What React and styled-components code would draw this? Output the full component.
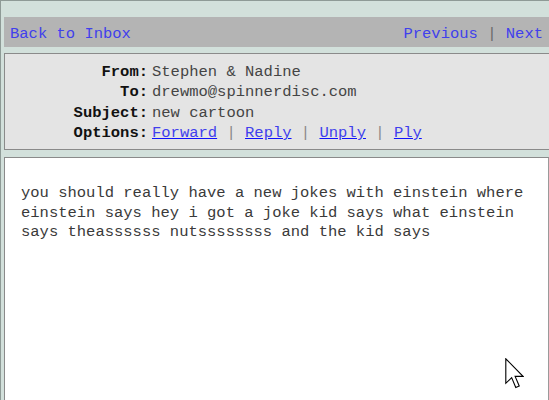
import React from "react";
import styled, { createGlobalStyle } from "styled-components";

const Global = createGlobalStyle`
  html, body { margin: 0; padding: 0; background: #d2e0db; }
  body { font-family: "Liberation Mono", "Courier New", monospace; }
`;

const Frame = styled.div`
  position: relative;
  box-sizing: border-box;
  height: 400px;
  overflow: hidden;
  background: #d2e0db;
  border-top: 1px solid #8e9a96;
  border-left: 1px solid #8e9a96;
  padding: 16px 0 0 3px;
  font-size: 15.5px;
`;

const Toolbar = styled.div`
  display: flex;
  align-items: center;
  justify-content: space-between;
  box-sizing: border-box;
  height: 30px;
  padding: 3px 6px 0 6px;
  background: #b4b4b4;
  margin-bottom: 6px;
`;

const NavLink = styled.a`
  color: #4040ec;
  text-decoration: none;
  cursor: pointer;
`;

const Sep = styled.span`
  color: #6a6a6a;
`;

const Header = styled.div`
  display: grid;
  grid-template-columns: 143px 1fr;
  column-gap: 4px;
  grid-auto-rows: 20.3px;
  align-items: center;
  padding: 8px 0 6px 0;
  background: #e4e4e4;
  border-top: 1px solid #8a8a8a;
  border-left: 1px solid #8a8a8a;
  border-bottom: 1px solid #8a8a8a;
`;

const Label = styled.div`
  text-align: right;
  font-weight: bold;
  color: #111;
`;

const Value = styled.div`
  color: #444;
  white-space: pre;
`;

const OptLink = styled.a`
  color: #4040ec;
  text-decoration: underline;
  text-decoration-color: #1010ff;
  cursor: pointer;
`;

const OptSep = styled.span`
  color: #8a8a8a;
`;

const Body = styled.div`
  margin-top: 7px;
  box-sizing: border-box;
  height: 260px;
  background: #ffffff;
  border-top: 1px solid #8a8a8a;
  border-left: 1px solid #8a8a8a;
  border-right: 1px solid #9a9a9a;
  padding: 26px 12px 0 16px;
  color: #3a3a3a;
  line-height: 19.5px;
`;

const Cursor = styled.svg`
  position: absolute;
  left: 504px;
  top: 357px;
`;

export default function App() {
  return (
    <>
      <Global />
      <Frame>
        <Toolbar>
          <NavLink>Back to Inbox</NavLink>
          <span>
            <NavLink>Previous</NavLink>
            <Sep> | </Sep>
            <NavLink>Next</NavLink>
          </span>
        </Toolbar>
        <Header>
          <Label>From:</Label>
          <Value>Stephen &amp; Nadine</Value>
          <Label>To:</Label>
          <Value>drewmo@spinnerdisc.com</Value>
          <Label>Subject:</Label>
          <Value>new cartoon</Value>
          <Label>Options:</Label>
          <Value>
            <OptLink>Forward</OptLink>
            <OptSep> | </OptSep>
            <OptLink>Reply</OptLink>
            <OptSep> | </OptSep>
            <OptLink>Unply</OptLink>
            <OptSep> | </OptSep>
            <OptLink>Ply</OptLink>
          </Value>
        </Header>
        <Body>
          you should really have a new jokes with einstein where einstein says
          hey i got a joke kid says what einstein says theassssss nutssssssss
          and the kid says
        </Body>
        <Cursor width="19" height="34" viewBox="0 0 12 21.5">
          <path
            d="M0.5 0.5 L0.5 16 L4.2 12.4 L6.8 18.6 L9 17.7 L6.4 11.6 L11.4 11.6 Z"
            fill="#fff"
            stroke="#000"
            strokeWidth="0.7"
            strokeLinejoin="miter"
          />
        </Cursor>
      </Frame>
    </>
  );
}
